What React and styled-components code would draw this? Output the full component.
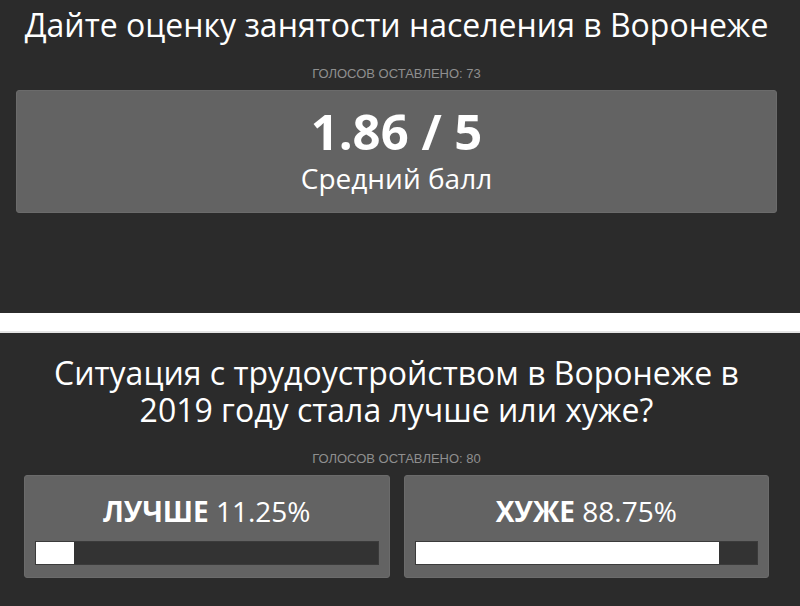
import React from "react";
import styled, { createGlobalStyle } from "styled-components";

const GlobalStyle = createGlobalStyle`
  html, body {
    margin: 0;
    padding: 0;
    background: #ffffff;
  }
  body {
    font-family: "Open Sans", "Liberation Sans", sans-serif;
    color: #fff;
  }
`;

const polls = {
  rating: {
    title: "Дайте оценку занятости населения в Воронеже",
    votes: 73,
    score: "1.86 / 5",
    caption: "Средний балл",
  },
  compare: {
    title: "Ситуация с трудоустройством в Воронеже в 2019 году стала лучше или хуже?",
    votes: 80,
    options: [
      { label: "ЛУЧШЕ", value: 11.25 },
      { label: "ХУЖЕ", value: 88.75 },
    ],
  },
};

const App = () => {
  const { rating, compare } = polls;
  return (
    <>
      <GlobalStyle />
      <Page>
        <Section $top={6} $side={16} $bottom={100}>
          <Title>{rating.title}</Title>
          <Votes>Голосов оставлено: {rating.votes}</Votes>
          <ScoreCard>
            <Score>{rating.score}</Score>
            <Caption>{rating.caption}</Caption>
          </ScoreCard>
        </Section>
        <Divider />
        <Section $top={21} $side={24} $bottom={28}>
          <Title>{compare.title}</Title>
          <Votes>Голосов оставлено: {compare.votes}</Votes>
          <Options>
            {compare.options.map((opt) => (
              <OptionCard key={opt.label}>
                <OptionText>
                  <b>{opt.label}</b> {opt.value}%
                </OptionText>
                <Track>
                  <Fill style={{ width: `${opt.value}%` }} />
                </Track>
              </OptionCard>
            ))}
          </Options>
        </Section>
      </Page>
    </>
  );
};

export default App;

// Styled Components
const Page = styled.div`
  width: 800px;
  display: flex;
  flex-direction: column;
`;

const Section = styled.section`
  background: #2b2b2b;
  padding: ${(p) => p.$top}px ${(p) => p.$side + 7}px ${(p) => p.$bottom}px
    ${(p) => p.$side}px;
  display: flex;
  flex-direction: column;
  align-items: stretch;
`;

const Divider = styled.div`
  height: 18px;
  background: #ffffff;
  border-bottom: 2px solid #e4e4e4;
`;

const Title = styled.h2`
  margin: 0;
  font-size: 32px;
  font-weight: 400;
  line-height: 37.5px;
  text-align: center;
  color: #ffffff;
`;

const Votes = styled.div`
  margin: 22px 0 9px;
  font-family: "Liberation Sans", Arial, sans-serif;
  font-size: 13px;
  line-height: 15px;
  text-transform: uppercase;
  text-align: center;
  color: #8f8f8f;
`;

const ScoreCard = styled.div`
  background: #636363;
  border: 1px solid #6b6b6b;
  border-radius: 3px;
  padding: 12px 10px 15px;
  text-align: center;
`;

const Score = styled.div`
  font-size: 49px;
  font-weight: 700;
  line-height: 56px;
`;

const Caption = styled.div`
  font-size: 28px;
  line-height: 38px;
`;

const Options = styled.div`
  display: grid;
  grid-template-columns: 1fr 1fr;
  gap: 14px;
`;

const OptionCard = styled.div`
  background: #636363;
  border: 1px solid #6b6b6b;
  border-radius: 3px;
  padding: 18px 10px 12px;
  display: flex;
  flex-direction: column;
  gap: 13px;
`;

const OptionText = styled.div`
  font-size: 28px;
  line-height: 34px;
  text-align: center;

  b {
    font-weight: 700;
  }
`;

const Track = styled.div`
  height: 24px;
  background: #333333;
  border: 1px solid #3b3b3b;
  box-sizing: border-box;
  display: flex;
`;

const Fill = styled.div`
  height: 100%;
  background: #ffffff;
`;
